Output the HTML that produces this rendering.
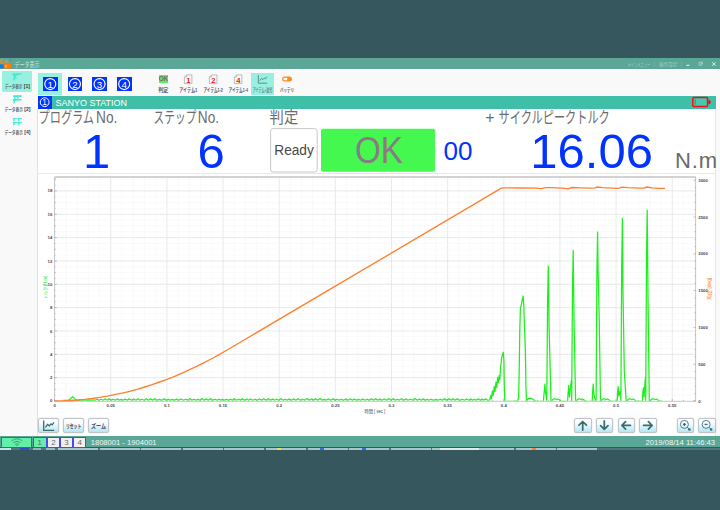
<!DOCTYPE html>
<html><head><meta charset="utf-8"><title>Data</title>
<style>
html,body{margin:0;padding:0;}
body{width:720px;height:510px;overflow:hidden;background:#37575f;position:relative;font-family:"Liberation Sans",sans-serif;}
.abs{position:absolute;}
.t{position:absolute;white-space:nowrap;line-height:1;}
svg{position:absolute;left:0;top:0;overflow:visible;}
svg text{font-family:"Liberation Sans","Noto Sans CJK JP",sans-serif;}
.btn{position:absolute;box-sizing:border-box;border:1px solid #c0c4c8;border-radius:2px;box-shadow:0 0 1.2px #b8b8b8;background:linear-gradient(#ffffff 0%,#f4fbfd 35%,#b4e6f4 100%);}
.sb{position:absolute;box-sizing:border-box;border:1px solid #4a4aec;top:436.6px;height:11.2px;}
</style></head><body>

<div class="abs" style="left:0;top:57.6px;width:720px;height:11.1px;background:#5aa797;"></div>
<div class="abs" style="left:0;top:68.7px;width:720px;height:367px;background:#f9f9f9;"></div>
<div class="abs" style="left:0;top:68.7px;width:720px;height:1.5px;background:#fff;"></div>
<div class="abs" style="left:37px;top:108px;width:679.4px;height:327.7px;background:#fff;border-left:1px solid #e2e2e2;border-right:1px solid #e6e6e6;box-sizing:border-box;"></div>
<div class="abs" style="left:38px;top:173.2px;width:678px;height:1px;background:#e8e8e8;"></div>
<div class="abs" style="left:38px;top:95.5px;width:678px;height:13px;background:#40bfa8;"></div>
<div class="abs" style="left:38px;top:95.5px;width:13.5px;height:13px;background:#0033ff;"></div>
<div class="abs" style="left:0;top:435.7px;width:720px;height:11.8px;background:#5aa797;"></div>
<div class="abs" style="left:0;top:447.5px;width:720px;height:2.8px;background:#4f787e;"></div>
<div class="abs" style="left:0px;top:447.7px;width:11px;height:2.5px;background:#c8e0e8;"></div>
<div class="abs" style="left:20px;top:447.7px;width:9px;height:2.5px;background:#3050c0;"></div>
<div class="abs" style="left:33px;top:447.7px;width:8px;height:2.5px;background:#98b0c0;"></div>
<div class="abs" style="left:46px;top:447.7px;width:9px;height:2.5px;background:#a0b8c0;"></div>
<div class="abs" style="left:58px;top:447.7px;width:40px;height:2.5px;background:#a9c7ca;"></div>
<div class="abs" style="left:99.6px;top:447.7px;width:40px;height:2.5px;background:#a9c7ca;"></div>
<div class="abs" style="left:141.2px;top:447.7px;width:40px;height:2.5px;background:#a9c7ca;"></div>
<div class="abs" style="left:182.79999999999998px;top:447.7px;width:40px;height:2.5px;background:#a9c7ca;"></div>
<div class="abs" style="left:224.39999999999998px;top:447.7px;width:40px;height:2.5px;background:#a9c7ca;"></div>
<div class="abs" style="left:266.0px;top:447.7px;width:40px;height:2.5px;background:#a9c7ca;"></div>
<div class="abs" style="left:307.6px;top:447.7px;width:40px;height:2.5px;background:#a9c7ca;"></div>
<div class="abs" style="left:349.20000000000005px;top:447.7px;width:40px;height:2.5px;background:#a9c7ca;"></div>
<div class="abs" style="left:390.80000000000007px;top:447.7px;width:40px;height:2.5px;background:#a9c7ca;"></div>
<div class="abs" style="left:432.4000000000001px;top:447.7px;width:40px;height:2.5px;background:#a9c7ca;"></div>
<div class="abs" style="left:474.0000000000001px;top:447.7px;width:40px;height:2.5px;background:#a9c7ca;"></div>
<div class="abs" style="left:515.6000000000001px;top:447.7px;width:40px;height:2.5px;background:#a9c7ca;"></div>
<div class="abs" style="left:557.2000000000002px;top:447.7px;width:40px;height:2.5px;background:#a9c7ca;"></div>
<div class="abs" style="left:277px;top:448px;width:4px;height:2px;background:#f0e060;"></div>
<div class="abs" style="left:320px;top:448px;width:4px;height:2px;background:#3070e0;"></div>
<div class="abs" style="left:362px;top:448px;width:4px;height:2px;background:#3070e0;"></div>
<div class="abs" style="left:532px;top:448px;width:4px;height:2px;background:#ff8030;"></div>
<div class="abs" style="left:440px;top:447.7px;width:39px;height:2.5px;background:#dfeaea;"></div>
<div class="abs" style="left:2px;top:71.4px;width:30px;height:20.6px;background:#98f0e0;border-radius:1px;"></div>
<div class="abs" style="left:38.3px;top:73.4px;width:23.7px;height:21.4px;background:#98f0e0;"></div>
<div class="abs" style="left:250.9px;top:73.2px;width:23.1px;height:21.7px;background:#98f0e0;"></div>
<div class="abs" style="left:42.9px;top:76.8px;width:14.8px;height:14.4px;background:#0033ff;"></div>
<div class="abs" style="left:67.6px;top:76.8px;width:14.8px;height:14.4px;background:#0033ff;"></div>
<div class="abs" style="left:92.2px;top:76.8px;width:14.8px;height:14.4px;background:#0033ff;"></div>
<div class="abs" style="left:116.8px;top:76.8px;width:14.8px;height:14.4px;background:#0033ff;"></div>
<div class="abs" style="left:158.7px;top:74.9px;width:9.2px;height:8.4px;background:#58f058;"></div>
<div class="t" style="left:158.7px;width:9.2px;text-align:center;top:76.1px;font-size:6.5px;font-weight:bold;color:#7a6a78;letter-spacing:-0.3px;">OK</div>
<div class="btn" style="left:38.4px;top:418.1px;width:20.7px;height:15px;"></div>
<div class="btn" style="left:63.0px;top:418.1px;width:20.9px;height:15px;"></div>
<div class="btn" style="left:88.0px;top:418.1px;width:20.6px;height:15px;"></div>
<div class="btn" style="left:574.3px;top:417.9px;width:17.4px;height:14.8px;"></div>
<div class="btn" style="left:595.6px;top:417.9px;width:17.4px;height:14.8px;"></div>
<div class="btn" style="left:617.5px;top:417.9px;width:17.4px;height:14.8px;"></div>
<div class="btn" style="left:639.2px;top:417.9px;width:17.4px;height:14.8px;"></div>
<div class="btn" style="left:676.8px;top:417.9px;width:17.4px;height:14.8px;"></div>
<div class="btn" style="left:698.4px;top:417.9px;width:17.4px;height:14.8px;"></div>
<div class="sb" style="left:1.4px;width:30.6px;background:#62f0a8;border-color:#3c5cd8;"></div>
<div class="sb" style="left:33.0px;width:13.7px;background:#62f0a8;"></div>
<div class="t" style="left:33.0px;width:13.7px;text-align:center;top:438.5px;font-size:8px;color:#686868;">1</div>
<div class="sb" style="left:47.3px;width:12.5px;background:#f2f0ee;"></div>
<div class="t" style="left:47.3px;width:12.5px;text-align:center;top:438.5px;font-size:8px;color:#686868;">2</div>
<div class="sb" style="left:60.3px;width:12.5px;background:#f2f0ee;"></div>
<div class="t" style="left:60.3px;width:12.5px;text-align:center;top:438.5px;font-size:8px;color:#686868;">3</div>
<div class="sb" style="left:73.3px;width:12.7px;background:#f2f0ee;"></div>
<div class="t" style="left:73.3px;width:12.7px;text-align:center;top:438.5px;font-size:8px;color:#686868;">4</div>
<svg width="720" height="510" viewBox="0 0 720 510">
<rect x="0" y="58.6" width="11" height="10" fill="#58a8a0"/>
<path d="M3.4 59.8H0.9V62.9H3.4M5.2 59.2V63.4M8 59.2V63.4M5.2 61.4H8" fill="none" stroke="#ff8a10" stroke-width="1.1"/>
<rect x="8.6" y="59.4" width="2.2" height="1" fill="#2090f0"/>
<rect x="0" y="64.4" width="3.6" height="3.8" fill="#1878e8"/>
<rect x="4.2" y="64" width="6.8" height="4.6" fill="#ff7c08"/>
<rect x="5" y="65" width="2" height="2.6" fill="#ffa040"/>
<circle cx="50.25" cy="84.05" r="5.5" fill="none" stroke="#fff" stroke-width="1.15"/>
<text x="50.25" y="87.5" font-size="9.8" fill="#fff" text-anchor="middle">1</text>
<circle cx="74.94999999999999" cy="84.05" r="5.5" fill="none" stroke="#fff" stroke-width="1.15"/>
<text x="74.95" y="87.5" font-size="9.8" fill="#fff" text-anchor="middle">2</text>
<circle cx="99.55" cy="84.05" r="5.5" fill="none" stroke="#fff" stroke-width="1.15"/>
<text x="99.55" y="87.5" font-size="9.8" fill="#fff" text-anchor="middle">3</text>
<circle cx="124.14999999999999" cy="84.05" r="5.5" fill="none" stroke="#fff" stroke-width="1.15"/>
<text x="124.15" y="87.5" font-size="9.8" fill="#fff" text-anchor="middle">4</text>
<circle cx="44.65" cy="102.15" r="4.4" fill="none" stroke="#fff" stroke-width="1"/>
<text x="44.65" y="105.05" font-size="8.2" fill="#fff" text-anchor="middle">1</text>
<text x="55.5" y="105.6" font-size="9.5" fill="#fff" textLength="71.5" lengthAdjust="spacingAndGlyphs">SANYO STATION</text>
<rect x="692.8" y="97.6" width="14.8" height="8.8" rx="1.2" fill="#48c8b4" stroke="#f01010" stroke-width="1.5"/>
<rect x="708.3" y="100.3" width="2.3" height="3.6" rx="0.8" fill="#f01010"/>
<rect x="694.6" y="99.3" width="1.3" height="5.4" fill="#c06050"/>
<text x="14.6" y="66.6" font-size="7" fill="#cfe0dc" textLength="25" lengthAdjust="spacingAndGlyphs">データ表示</text>
<text x="627.4" y="66" font-size="4.6" fill="#a6cec8" textLength="22.8" lengthAdjust="spacingAndGlyphs">メインメニュー</text>
<text x="659.1" y="66" font-size="4.8" fill="#a6cec8" textLength="18.3" lengthAdjust="spacingAndGlyphs">操作設定</text>
<rect x="654" y="61" width="0.6" height="6" fill="#78b8aa"/><rect x="681" y="61" width="0.6" height="6" fill="#78b8aa"/>
<rect x="686.4" y="64.8" width="3" height="1" fill="#eef"/>
<rect x="699" y="62.8" width="2.6" height="2.4" fill="none" stroke="#c4e2dc" stroke-width="0.6"/><path d="M700 62.6V62H702.5V64.3H701.8" fill="none" stroke="#c4e2dc" stroke-width="0.5"/>
<path d="M712.2 62.2L715.6 65.8M715.6 62.2L712.2 65.8" stroke="#f4faf8" stroke-width="0.8" fill="none"/>
<path transform="translate(12.6,73.2) scale(1.0)" fill="#44ecd0" d="M0 0H9V1.6H5.6V2.6H3.6L3.2 4.2H4.4V5.2H2.6L2.2 7H0.4L1.2 2.6H0Z"/>
<text x="4.8" y="87.9" font-size="5" font-weight="bold" fill="#5e6a70" textLength="17.6" lengthAdjust="spacingAndGlyphs">データ表示</text>
<text x="23.8" y="87.9" font-size="5.2" font-weight="bold" fill="#3a3a44" textLength="6.2" lengthAdjust="spacingAndGlyphs">[1]</text>
<path transform="translate(13.6,95.4) scale(0.62)" fill="#44ecd0" d="M0 0H9V1.6H5.6V2.6H3.6L3.2 4.2H4.4V5.2H2.6L2.2 7H0.4L1.2 2.6H0Z"/>
<path transform="translate(12.8,99.2) scale(0.62)" fill="#44ecd0" d="M0 0H9V1.6H5.6V2.6H3.6L3.2 4.2H4.4V5.2H2.6L2.2 7H0.4L1.2 2.6H0Z"/>
<path transform="translate(16.8,95.4) scale(0.55)" fill="#44ecd0" d="M0 0H9V1.6H5.6V2.6H3.6L3.2 4.2H4.4V5.2H2.6L2.2 7H0.4L1.2 2.6H0Z"/>
<rect x="13" y="95.4" width="8.6" height="1.5" fill="#44ecd0"/><rect x="13" y="99" width="8.6" height="1.5" fill="#44ecd0"/>
<text x="4.6" y="110.9" font-size="5" font-weight="bold" fill="#5e6a70" textLength="18.2" lengthAdjust="spacingAndGlyphs">データ表示</text>
<text x="24.2" y="110.9" font-size="5.2" font-weight="bold" fill="#3a3a44" textLength="6.2" lengthAdjust="spacingAndGlyphs">[2]</text>
<path transform="translate(12.9,118.0) scale(0.5)" fill="#44ecd0" d="M0 0H9V1.6H5.6V2.6H3.6L3.2 4.2H4.4V5.2H2.6L2.2 7H0.4L1.2 2.6H0Z"/>
<path transform="translate(17.5,118.0) scale(0.5)" fill="#44ecd0" d="M0 0H9V1.6H5.6V2.6H3.6L3.2 4.2H4.4V5.2H2.6L2.2 7H0.4L1.2 2.6H0Z"/>
<path transform="translate(12.9,122.1) scale(0.5)" fill="#44ecd0" d="M0 0H9V1.6H5.6V2.6H3.6L3.2 4.2H4.4V5.2H2.6L2.2 7H0.4L1.2 2.6H0Z"/>
<path transform="translate(17.5,122.1) scale(0.5)" fill="#44ecd0" d="M0 0H9V1.6H5.6V2.6H3.6L3.2 4.2H4.4V5.2H2.6L2.2 7H0.4L1.2 2.6H0Z"/>
<text x="4.6" y="133.5" font-size="5" font-weight="bold" fill="#5e6a70" textLength="18.2" lengthAdjust="spacingAndGlyphs">データ表示</text>
<text x="24.2" y="133.5" font-size="5.2" font-weight="bold" fill="#3a3a44" textLength="6.2" lengthAdjust="spacingAndGlyphs">[4]</text>
<text x="158.2" y="91.8" font-size="5.2" font-weight="bold" fill="#4e5664" textLength="10.2" lengthAdjust="spacingAndGlyphs">判定</text>
<text x="179.2" y="91.8" font-size="5.2" font-weight="bold" fill="#4e5664" textLength="18.1" lengthAdjust="spacingAndGlyphs">アイテム1</text>
<text x="203.4" y="91.8" font-size="5.2" font-weight="bold" fill="#4e5664" textLength="19.4" lengthAdjust="spacingAndGlyphs">アイテム1-2</text>
<text x="228.4" y="91.8" font-size="5.2" font-weight="bold" fill="#4e5664" textLength="19.6" lengthAdjust="spacingAndGlyphs">アイテム1-4</text>
<text x="252.65" y="91.8" font-size="5.2" font-weight="bold" fill="#6a8a8a" textLength="19.8" lengthAdjust="spacingAndGlyphs">アイテム+波形</text>
<text x="280.1" y="91.8" font-size="5.2" font-weight="bold" fill="#4e5664" textLength="13.8" lengthAdjust="spacingAndGlyphs">バッテリ</text>
<path d="M186.6 74.9H191.9V83.6H184.4V77.1Z" fill="#fbfbfb" stroke="#a0a4a8" stroke-width="0.7" stroke-linejoin="round"/><path d="M186.6 74.9V77.1H184.4" fill="none" stroke="#a0a4a8" stroke-width="0.6"/><text x="188.3" y="82.7" font-size="7.6" font-weight="bold" fill="#f01818" text-anchor="middle" font-family="Liberation Sans">1</text>
<path d="M211.6 74.9H216.9V83.6H209.4V77.1Z" fill="#fbfbfb" stroke="#a0a4a8" stroke-width="0.7" stroke-linejoin="round"/><path d="M211.6 74.9V77.1H209.4" fill="none" stroke="#a0a4a8" stroke-width="0.6"/><text x="213.3" y="82.7" font-size="7.6" font-weight="bold" fill="#f01818" text-anchor="middle" font-family="Liberation Sans">2</text>
<path d="M236.6 74.9H241.9V83.6H234.4V77.1Z" fill="#fbfbfb" stroke="#a0a4a8" stroke-width="0.7" stroke-linejoin="round"/><path d="M236.6 74.9V77.1H234.4" fill="none" stroke="#a0a4a8" stroke-width="0.6"/><text x="238.3" y="82.7" font-size="7.6" font-weight="bold" fill="#f01818" text-anchor="middle" font-family="Liberation Sans">4</text>
<path d="M258.3 75V83.2H267.2" fill="none" stroke="#5a6a72" stroke-width="0.75"/>
<path d="M259.6 80.6L261.6 78.4L263 79.6L264.4 78L265.4 78.8L267 76.6" fill="none" stroke="#5a6a72" stroke-width="0.75"/>
<rect x="282.1" y="76.4" width="9.8" height="5.2" rx="2.4" fill="#ff8a18"/>
<rect x="283.5" y="77.7" width="3.7" height="2.6" rx="0.5" fill="#fff"/>
<text x="38.6" y="123.4" font-size="16" fill="#6c6c6c" textLength="55.4" lengthAdjust="spacingAndGlyphs">プログラム</text>
<text x="96" y="123.4" font-size="16" fill="#6c6c6c" textLength="21.3" lengthAdjust="spacingAndGlyphs">No.</text>
<text x="153.6" y="123.4" font-size="16" fill="#6c6c6c" textLength="42.8" lengthAdjust="spacingAndGlyphs">ステップ</text>
<text x="197.8" y="123.4" font-size="16" fill="#6c6c6c" textLength="21.2" lengthAdjust="spacingAndGlyphs">No.</text>
<text x="269.6" y="123.4" font-size="16" fill="#6c6c6c" textLength="28.6" lengthAdjust="spacingAndGlyphs">判定</text>
<text x="485.3" y="123.4" font-size="16" fill="#6c6c6c">+</text>
<text x="498.6" y="123.4" font-size="16" fill="#6c6c6c" textLength="111.2" lengthAdjust="spacingAndGlyphs">サイクルピークトルク</text>
<path d="M65.83 177.0V401.0" stroke="#f6f6f6" stroke-width="0.6"/><path d="M77.06 177.0V401.0" stroke="#f6f6f6" stroke-width="0.6"/><path d="M88.29 177.0V401.0" stroke="#f6f6f6" stroke-width="0.6"/><path d="M99.52 177.0V401.0" stroke="#f6f6f6" stroke-width="0.6"/><path d="M110.75 177.0V401.0" stroke="#e3e3e3" stroke-width="0.8"/><path d="M121.98 177.0V401.0" stroke="#f6f6f6" stroke-width="0.6"/><path d="M133.21 177.0V401.0" stroke="#f6f6f6" stroke-width="0.6"/><path d="M144.44 177.0V401.0" stroke="#f6f6f6" stroke-width="0.6"/><path d="M155.67 177.0V401.0" stroke="#f6f6f6" stroke-width="0.6"/><path d="M166.90 177.0V401.0" stroke="#e3e3e3" stroke-width="0.8"/><path d="M178.13 177.0V401.0" stroke="#f6f6f6" stroke-width="0.6"/><path d="M189.36 177.0V401.0" stroke="#f6f6f6" stroke-width="0.6"/><path d="M200.59 177.0V401.0" stroke="#f6f6f6" stroke-width="0.6"/><path d="M211.82 177.0V401.0" stroke="#f6f6f6" stroke-width="0.6"/><path d="M223.05 177.0V401.0" stroke="#e3e3e3" stroke-width="0.8"/><path d="M234.28 177.0V401.0" stroke="#f6f6f6" stroke-width="0.6"/><path d="M245.51 177.0V401.0" stroke="#f6f6f6" stroke-width="0.6"/><path d="M256.74 177.0V401.0" stroke="#f6f6f6" stroke-width="0.6"/><path d="M267.97 177.0V401.0" stroke="#f6f6f6" stroke-width="0.6"/><path d="M279.20 177.0V401.0" stroke="#e3e3e3" stroke-width="0.8"/><path d="M290.43 177.0V401.0" stroke="#f6f6f6" stroke-width="0.6"/><path d="M301.66 177.0V401.0" stroke="#f6f6f6" stroke-width="0.6"/><path d="M312.89 177.0V401.0" stroke="#f6f6f6" stroke-width="0.6"/><path d="M324.12 177.0V401.0" stroke="#f6f6f6" stroke-width="0.6"/><path d="M335.35 177.0V401.0" stroke="#e3e3e3" stroke-width="0.8"/><path d="M346.58 177.0V401.0" stroke="#f6f6f6" stroke-width="0.6"/><path d="M357.81 177.0V401.0" stroke="#f6f6f6" stroke-width="0.6"/><path d="M369.04 177.0V401.0" stroke="#f6f6f6" stroke-width="0.6"/><path d="M380.27 177.0V401.0" stroke="#f6f6f6" stroke-width="0.6"/><path d="M391.50 177.0V401.0" stroke="#e3e3e3" stroke-width="0.8"/><path d="M402.73 177.0V401.0" stroke="#f6f6f6" stroke-width="0.6"/><path d="M413.96 177.0V401.0" stroke="#f6f6f6" stroke-width="0.6"/><path d="M425.19 177.0V401.0" stroke="#f6f6f6" stroke-width="0.6"/><path d="M436.42 177.0V401.0" stroke="#f6f6f6" stroke-width="0.6"/><path d="M447.65 177.0V401.0" stroke="#e3e3e3" stroke-width="0.8"/><path d="M458.88 177.0V401.0" stroke="#f6f6f6" stroke-width="0.6"/><path d="M470.11 177.0V401.0" stroke="#f6f6f6" stroke-width="0.6"/><path d="M481.34 177.0V401.0" stroke="#f6f6f6" stroke-width="0.6"/><path d="M492.57 177.0V401.0" stroke="#f6f6f6" stroke-width="0.6"/><path d="M503.80 177.0V401.0" stroke="#e3e3e3" stroke-width="0.8"/><path d="M515.03 177.0V401.0" stroke="#f6f6f6" stroke-width="0.6"/><path d="M526.26 177.0V401.0" stroke="#f6f6f6" stroke-width="0.6"/><path d="M537.49 177.0V401.0" stroke="#f6f6f6" stroke-width="0.6"/><path d="M548.72 177.0V401.0" stroke="#f6f6f6" stroke-width="0.6"/><path d="M559.95 177.0V401.0" stroke="#e3e3e3" stroke-width="0.8"/><path d="M571.18 177.0V401.0" stroke="#f6f6f6" stroke-width="0.6"/><path d="M582.41 177.0V401.0" stroke="#f6f6f6" stroke-width="0.6"/><path d="M593.64 177.0V401.0" stroke="#f6f6f6" stroke-width="0.6"/><path d="M604.87 177.0V401.0" stroke="#f6f6f6" stroke-width="0.6"/><path d="M616.10 177.0V401.0" stroke="#e3e3e3" stroke-width="0.8"/><path d="M627.33 177.0V401.0" stroke="#f6f6f6" stroke-width="0.6"/><path d="M638.56 177.0V401.0" stroke="#f6f6f6" stroke-width="0.6"/><path d="M649.79 177.0V401.0" stroke="#f6f6f6" stroke-width="0.6"/><path d="M661.02 177.0V401.0" stroke="#f6f6f6" stroke-width="0.6"/><path d="M672.25 177.0V401.0" stroke="#e3e3e3" stroke-width="0.8"/><path d="M683.48 177.0V401.0" stroke="#f6f6f6" stroke-width="0.6"/><path d="M54.6 395.17H695.6" stroke="#f6f6f6" stroke-width="0.6"/><path d="M54.6 389.33H695.6" stroke="#f6f6f6" stroke-width="0.6"/><path d="M54.6 383.50H695.6" stroke="#f6f6f6" stroke-width="0.6"/><path d="M54.6 377.66H695.6" stroke="#e3e3e3" stroke-width="0.8"/><path d="M54.6 371.82H695.6" stroke="#f6f6f6" stroke-width="0.6"/><path d="M54.6 365.99H695.6" stroke="#f6f6f6" stroke-width="0.6"/><path d="M54.6 360.15H695.6" stroke="#f6f6f6" stroke-width="0.6"/><path d="M54.6 354.32H695.6" stroke="#e3e3e3" stroke-width="0.8"/><path d="M54.6 348.49H695.6" stroke="#f6f6f6" stroke-width="0.6"/><path d="M54.6 342.65H695.6" stroke="#f6f6f6" stroke-width="0.6"/><path d="M54.6 336.81H695.6" stroke="#f6f6f6" stroke-width="0.6"/><path d="M54.6 330.98H695.6" stroke="#e3e3e3" stroke-width="0.8"/><path d="M54.6 325.14H695.6" stroke="#f6f6f6" stroke-width="0.6"/><path d="M54.6 319.31H695.6" stroke="#f6f6f6" stroke-width="0.6"/><path d="M54.6 313.48H695.6" stroke="#f6f6f6" stroke-width="0.6"/><path d="M54.6 307.64H695.6" stroke="#e3e3e3" stroke-width="0.8"/><path d="M54.6 301.81H695.6" stroke="#f6f6f6" stroke-width="0.6"/><path d="M54.6 295.97H695.6" stroke="#f6f6f6" stroke-width="0.6"/><path d="M54.6 290.13H695.6" stroke="#f6f6f6" stroke-width="0.6"/><path d="M54.6 284.30H695.6" stroke="#e3e3e3" stroke-width="0.8"/><path d="M54.6 278.47H695.6" stroke="#f6f6f6" stroke-width="0.6"/><path d="M54.6 272.63H695.6" stroke="#f6f6f6" stroke-width="0.6"/><path d="M54.6 266.79H695.6" stroke="#f6f6f6" stroke-width="0.6"/><path d="M54.6 260.96H695.6" stroke="#e3e3e3" stroke-width="0.8"/><path d="M54.6 255.12H695.6" stroke="#f6f6f6" stroke-width="0.6"/><path d="M54.6 249.29H695.6" stroke="#f6f6f6" stroke-width="0.6"/><path d="M54.6 243.46H695.6" stroke="#f6f6f6" stroke-width="0.6"/><path d="M54.6 237.62H695.6" stroke="#e3e3e3" stroke-width="0.8"/><path d="M54.6 231.78H695.6" stroke="#f6f6f6" stroke-width="0.6"/><path d="M54.6 225.95H695.6" stroke="#f6f6f6" stroke-width="0.6"/><path d="M54.6 220.12H695.6" stroke="#f6f6f6" stroke-width="0.6"/><path d="M54.6 214.28H695.6" stroke="#e3e3e3" stroke-width="0.8"/><path d="M54.6 208.44H695.6" stroke="#f6f6f6" stroke-width="0.6"/><path d="M54.6 202.61H695.6" stroke="#f6f6f6" stroke-width="0.6"/><path d="M54.6 196.78H695.6" stroke="#f6f6f6" stroke-width="0.6"/><path d="M54.6 190.94H695.6" stroke="#e3e3e3" stroke-width="0.8"/><path d="M54.6 185.10H695.6" stroke="#f6f6f6" stroke-width="0.6"/><path d="M54.6 179.27H695.6" stroke="#f6f6f6" stroke-width="0.6"/>
<path d="M54.6 177.0H695.6" stroke="#c4c4c4" stroke-width="1.4" fill="none"/>
<path d="M54.6 177.0V401.3H695.6V177.0" stroke="#aeaeae" stroke-width="0.7" fill="none"/>
<path d="M54.6 401.00h2.2M54.6 395.17h0.8M54.6 389.33h1.2M54.6 383.50h0.8M54.6 377.66h2.2M54.6 371.82h0.8M54.6 365.99h1.2M54.6 360.15h0.8M54.6 354.32h2.2M54.6 348.49h0.8M54.6 342.65h1.2M54.6 336.81h0.8M54.6 330.98h2.2M54.6 325.14h0.8M54.6 319.31h1.2M54.6 313.48h0.8M54.6 307.64h2.2M54.6 301.81h0.8M54.6 295.97h1.2M54.6 290.13h0.8M54.6 284.30h2.2M54.6 278.47h0.8M54.6 272.63h1.2M54.6 266.79h0.8M54.6 260.96h2.2M54.6 255.12h0.8M54.6 249.29h1.2M54.6 243.46h0.8M54.6 237.62h2.2M54.6 231.78h0.8M54.6 225.95h1.2M54.6 220.12h0.8M54.6 214.28h2.2M54.6 208.44h0.8M54.6 202.61h1.2M54.6 196.78h0.8M54.6 190.94h2.2M54.6 185.10h0.8M54.6 179.27h1.2M54.6 179.27h0.8M695.6 401.00h-2.2M695.6 393.64h-1.1M695.6 386.28h-1.1M695.6 378.92h-1.1M695.6 371.56h-1.1M695.6 364.20h-2.2M695.6 356.84h-1.1M695.6 349.48h-1.1M695.6 342.12h-1.1M695.6 334.76h-1.1M695.6 327.40h-2.2M695.6 320.04h-1.1M695.6 312.68h-1.1M695.6 305.32h-1.1M695.6 297.96h-1.1M695.6 290.60h-2.2M695.6 283.24h-1.1M695.6 275.88h-1.1M695.6 268.52h-1.1M695.6 261.16h-1.1M695.6 253.80h-2.2M695.6 246.44h-1.1M695.6 239.08h-1.1M695.6 231.72h-1.1M695.6 224.36h-1.1M695.6 217.00h-2.2M695.6 209.64h-1.1M695.6 202.28h-1.1M695.6 194.92h-1.1M695.6 187.56h-1.1M695.6 180.20h-2.2M54.60 401.0v-2M65.83 401.0v-1M77.06 401.0v-1M88.29 401.0v-1M99.52 401.0v-1M110.75 401.0v-2M121.98 401.0v-1M133.21 401.0v-1M144.44 401.0v-1M155.67 401.0v-1M166.90 401.0v-2M178.13 401.0v-1M189.36 401.0v-1M200.59 401.0v-1M211.82 401.0v-1M223.05 401.0v-2M234.28 401.0v-1M245.51 401.0v-1M256.74 401.0v-1M267.97 401.0v-1M279.20 401.0v-2M290.43 401.0v-1M301.66 401.0v-1M312.89 401.0v-1M324.12 401.0v-1M335.35 401.0v-2M346.58 401.0v-1M357.81 401.0v-1M369.04 401.0v-1M380.27 401.0v-1M391.50 401.0v-2M402.73 401.0v-1M413.96 401.0v-1M425.19 401.0v-1M436.42 401.0v-1M447.65 401.0v-2M458.88 401.0v-1M470.11 401.0v-1M481.34 401.0v-1M492.57 401.0v-1M503.80 401.0v-2M515.03 401.0v-1M526.26 401.0v-1M537.49 401.0v-1M548.72 401.0v-1M559.95 401.0v-2M571.18 401.0v-1M582.41 401.0v-1M593.64 401.0v-1M604.87 401.0v-1M616.10 401.0v-2M627.33 401.0v-1M638.56 401.0v-1M649.79 401.0v-1M661.02 401.0v-1M672.25 401.0v-2M683.48 401.0v-1M694.71 401.0v-1" stroke="#888" stroke-width="0.5" fill="none"/>
<text x="52.3" y="379.21" font-size="4.3" font-weight="bold" fill="#4a4a56" text-anchor="end" font-family="Liberation Sans">2</text>
<text x="52.3" y="355.87" font-size="4.3" font-weight="bold" fill="#4a4a56" text-anchor="end" font-family="Liberation Sans">4</text>
<text x="52.3" y="332.53" font-size="4.3" font-weight="bold" fill="#4a4a56" text-anchor="end" font-family="Liberation Sans">6</text>
<text x="52.3" y="309.19" font-size="4.3" font-weight="bold" fill="#4a4a56" text-anchor="end" font-family="Liberation Sans">8</text>
<text x="52.3" y="285.85" font-size="4.3" font-weight="bold" fill="#4a4a56" text-anchor="end" font-family="Liberation Sans">10</text>
<text x="52.3" y="262.51" font-size="4.3" font-weight="bold" fill="#4a4a56" text-anchor="end" font-family="Liberation Sans">12</text>
<text x="52.3" y="239.17" font-size="4.3" font-weight="bold" fill="#4a4a56" text-anchor="end" font-family="Liberation Sans">14</text>
<text x="52.3" y="215.83" font-size="4.3" font-weight="bold" fill="#4a4a56" text-anchor="end" font-family="Liberation Sans">16</text>
<text x="52.3" y="192.49" font-size="4.3" font-weight="bold" fill="#4a4a56" text-anchor="end" font-family="Liberation Sans">18</text>
<text x="52.3" y="402.3" font-size="4.3" font-weight="bold" fill="#4a4a56" text-anchor="end" font-family="Liberation Sans">0</text>
<text x="698.3" y="402.55" font-size="4.3" font-weight="bold" fill="#4a4a56" font-family="Liberation Sans">0</text>
<text x="698.3" y="365.75" font-size="4.3" font-weight="bold" fill="#4a4a56" font-family="Liberation Sans">500</text>
<text x="698.3" y="328.95" font-size="4.3" font-weight="bold" fill="#4a4a56" font-family="Liberation Sans">1000</text>
<text x="698.3" y="292.15" font-size="4.3" font-weight="bold" fill="#4a4a56" font-family="Liberation Sans">1500</text>
<text x="698.3" y="255.35" font-size="4.3" font-weight="bold" fill="#4a4a56" font-family="Liberation Sans">2000</text>
<text x="698.3" y="218.55" font-size="4.3" font-weight="bold" fill="#4a4a56" font-family="Liberation Sans">2500</text>
<text x="698.3" y="181.75" font-size="4.3" font-weight="bold" fill="#4a4a56" font-family="Liberation Sans">3000</text>
<text x="54.60" y="406.9" font-size="4.3" font-weight="bold" fill="#4a4a56" text-anchor="middle" font-family="Liberation Sans">0</text>
<text x="110.75" y="406.9" font-size="4.3" font-weight="bold" fill="#4a4a56" text-anchor="middle" font-family="Liberation Sans">0.05</text>
<text x="166.90" y="406.9" font-size="4.3" font-weight="bold" fill="#4a4a56" text-anchor="middle" font-family="Liberation Sans">0.1</text>
<text x="223.05" y="406.9" font-size="4.3" font-weight="bold" fill="#4a4a56" text-anchor="middle" font-family="Liberation Sans">0.15</text>
<text x="279.20" y="406.9" font-size="4.3" font-weight="bold" fill="#4a4a56" text-anchor="middle" font-family="Liberation Sans">0.2</text>
<text x="335.35" y="406.9" font-size="4.3" font-weight="bold" fill="#4a4a56" text-anchor="middle" font-family="Liberation Sans">0.25</text>
<text x="391.50" y="406.9" font-size="4.3" font-weight="bold" fill="#4a4a56" text-anchor="middle" font-family="Liberation Sans">0.3</text>
<text x="447.65" y="406.9" font-size="4.3" font-weight="bold" fill="#4a4a56" text-anchor="middle" font-family="Liberation Sans">0.35</text>
<text x="503.80" y="406.9" font-size="4.3" font-weight="bold" fill="#4a4a56" text-anchor="middle" font-family="Liberation Sans">0.4</text>
<text x="559.95" y="406.9" font-size="4.3" font-weight="bold" fill="#4a4a56" text-anchor="middle" font-family="Liberation Sans">0.45</text>
<text x="616.10" y="406.9" font-size="4.3" font-weight="bold" fill="#4a4a56" text-anchor="middle" font-family="Liberation Sans">0.5</text>
<text x="672.25" y="406.9" font-size="4.3" font-weight="bold" fill="#4a4a56" text-anchor="middle" font-family="Liberation Sans">0.55</text>
<g transform="translate(47,288) rotate(-90)"><text x="-11.25" y="0" font-size="4.5" fill="#30e030" textLength="23.3" lengthAdjust="spacingAndGlyphs">トルク [N.m]</text></g>
<g transform="translate(711.3,288.5) rotate(-90)"><text x="-11.4" y="0" font-size="4.5" fill="#ff7a28" textLength="22.4" lengthAdjust="spacingAndGlyphs">角度 [deg]</text></g>
<text x="364.5" y="413.1" font-size="4.5" fill="#404a68" textLength="20.8" lengthAdjust="spacingAndGlyphs">時間 [ sec ]</text>
<clipPath id="gc"><rect x="54.6" y="177.0" width="641.0" height="223.75"/></clipPath>
<polyline clip-path="url(#gc)" fill="none" stroke="#1cf01c" stroke-width="1.25" stroke-linejoin="round" points="63.5,400.2 64.5,400.3 66.5,400.3 67.5,400.3 68.5,400.1 69.5,399.6 70.5,398.7 71.5,397.5 72.5,396.9 73.5,397.4 74.5,398.6 75.5,399.6 76.5,400.1 77.5,400.3 78.5,400.3 79.5,400.3 81.3,399.8 83.5,400.3 85.3,399.8 87.4,400.3 89.4,399.8 91.1,400.3 93.2,399.8 95.0,400.3 97.0,399.3 98.8,400.3 101.1,399.3 103.0,400.3 105.5,398.9 107.5,400.3 109.2,398.7 111.2,400.3 113.0,399.2 115.3,400.3 117.5,398.9 119.5,400.3 121.2,399.4 123.1,400.3 125.1,399.1 127.3,400.3 129.2,398.8 131.5,400.3 133.7,399.0 136.1,400.3 138.0,398.6 139.8,400.3 142.1,399.3 144.2,400.3 146.4,398.8 148.6,400.3 150.5,398.8 152.7,400.3 154.8,398.7 157.2,400.3 159.5,399.4 161.7,400.3 164.2,398.7 166.1,400.3 168.4,399.4 170.4,400.3 172.2,399.4 174.5,400.3 176.4,399.1 178.8,400.3 180.9,399.0 183.3,400.3 185.7,399.2 187.7,400.3 190.1,398.6 192.0,400.3 193.8,399.2 195.9,400.3 197.8,399.4 199.9,400.3 202.0,398.6 204.3,400.3 206.5,398.9 208.2,400.3 210.5,398.7 212.9,400.3 214.9,399.3 217.1,400.3 218.9,399.2 220.7,400.3 222.4,399.4 224.3,400.3 226.3,399.4 228.7,400.3 230.5,399.2 232.4,400.3 234.2,398.7 236.7,400.3 238.8,399.3 240.6,400.3 242.5,398.7 244.3,400.3 246.8,399.0 248.6,400.3 250.3,399.0 252.8,400.3 255.1,399.2 257.1,400.3 259.4,399.0 261.7,400.3 263.6,398.8 266.1,400.3 268.4,398.7 270.7,400.3 272.8,399.1 274.6,400.3 276.5,399.2 278.7,400.3 280.8,398.7 283.3,400.3 285.3,399.2 287.2,400.3 289.0,398.9 291.4,400.3 293.5,398.9 295.9,400.3 298.1,398.7 300.4,400.3 302.5,399.3 304.8,400.3 307.2,398.6 309.2,400.3 311.7,398.8 313.5,400.3 315.3,398.7 317.7,400.3 320.0,398.6 322.2,400.3 324.4,399.3 326.1,400.3 328.3,399.0 330.8,400.3 333.2,398.7 335.0,400.3 337.0,399.2 339.1,400.3 341.2,399.3 343.6,400.3 345.7,398.9 348.1,400.3 350.5,399.0 352.6,400.3 354.4,399.0 356.2,400.3 358.5,399.3 360.6,400.3 362.8,399.1 364.9,400.3 367.2,399.3 369.4,400.3 371.3,398.8 373.4,400.3 375.7,398.7 377.7,400.3 379.9,399.0 382.1,400.3 384.2,399.0 386.7,400.3 389.1,398.6 391.0,400.3 393.4,398.7 395.3,400.3 397.3,399.3 399.2,400.3 401.4,398.8 403.9,400.3 406.1,398.9 407.9,400.3 410.4,399.2 412.9,400.3 415.0,398.6 417.3,400.3 419.4,399.0 421.4,400.3 423.3,398.8 425.0,400.3 427.1,399.4 429.0,400.3 431.2,399.3 433.6,400.3 436.1,399.3 438.0,400.3 440.4,399.2 442.2,400.3 444.6,398.7 446.5,400.3 448.9,398.9 451.2,400.3 452.9,398.8 455.0,400.3 457.4,398.9 459.8,400.3 462.2,399.3 464.5,400.3 466.5,399.0 469.0,400.3 470.8,399.0 472.6,400.3 474.5,399.4 476.3,400.3 478.3,398.8 480.2,400.3 482.1,399.1 483.8,400.3 485.5,398.8 487.6,400.3 489.8,400.0 490.8,395.5 491.5,398.6 492.4,391.0 493.2,395.4 494.2,386.5 495.0,391.6 496.0,382.0 496.8,387.5 497.6,377.5 498.3,382.5 499.1,375.5 499.8,380.0 500.6,368.0 501.6,358.0 502.6,354.5 503.3,352.3 503.9,360.0 504.3,385.0 504.8,401.2 508.0,401.3 512.0,401.3 516.0,401.3 517.6,400.8 518.6,398.0 519.2,372.0 519.8,330.0 520.4,308.0 521.2,305.5 522.0,301.0 523.1,296.0 523.8,305.0 524.3,322.0 524.8,334.0 525.4,352.0 525.9,385.0 526.5,401.0 528.5,398.4 530.5,398.2 532.5,399.0 534.5,400.6 536.0,401.3 540.0,401.3 543.4,401.0 544.2,392.0 544.9,384.2 545.6,393.0 546.3,397.0 546.8,400.8 547.6,300.0 548.3,266.2 549.1,327.0 551.0,401.3 552.0,400.8 553.2,399.2 555.0,398.8 556.6,399.5 558.0,399.0 559.6,400.0 561.0,401.0 563.0,401.3 567.6,401.0 568.2,392.0 568.7,385.4 569.5,397.0 570.6,386.0 571.4,380.5 571.9,388.0 571.7,400.8 572.5,288.1 573.2,250.3 574.0,318.2 575.6,401.3 576.6,400.8 577.8,399.2 579.6,398.8 581.2,399.5 582.6,399.0 584.2,400.0 585.6,401.0 588.0,401.3 592.2,401.0 592.7,391.0 593.2,384.2 593.9,394.0 594.8,398.5 596.1,400.8 596.9,274.3 597.6,232.0 598.1,270.7 599.2,318.0 600.5,401.3 601.5,400.8 602.7,399.2 604.5,398.8 606.1,399.5 607.5,399.0 609.1,400.0 610.5,401.0 613.0,401.3 617.2,401.0 617.6,392.0 618.1,386.6 618.9,396.0 619.9,392.5 620.5,391.0 620.9,400.8 621.7,264.1 622.4,218.3 622.9,287.0 624.3,371.0 626.2,401.3 627.2,400.8 628.4,399.2 630.2,398.8 631.8,399.5 633.2,399.0 634.8,400.0 636.2,401.0 638.0,401.3 642.4,401.0 642.8,393.0 643.4,387.9 644.1,397.0 645.0,382.0 645.6,376.8 645.9,386.0 645.7,400.8 646.5,257.8 647.2,210.0 648.0,296.1 649.3,401.3 650.3,400.8 651.5,399.2 653.3,398.8 654.9,399.5 656.3,399.0 657.9,400.0 659.3,401.0 661.5,401.3"/>
<polyline fill="none" stroke="#ff8030" stroke-width="1.35" stroke-linejoin="round" points="54.6,400.9 62.1,400.8 69.6,400.5 77.1,400.0 84.6,399.4 92.1,398.5 99.6,397.4 107.1,396.2 114.6,394.7 122.1,393.1 129.6,391.3 137.1,389.3 144.6,387.0 152.1,384.6 159.6,382.0 167.1,379.3 174.6,376.3 182.1,373.1 189.6,369.7 197.1,366.2 204.6,362.4 212.1,358.5 219.6,354.3 227.1,350.0 227.1,350.0 501.4,188.2 503.0,187.9 520.0,188.0 536.0,188.1 541.0,188.7 546.0,187.6 552.0,187.7 562.0,188.2 568.0,188.8 572.0,187.5 580.0,187.8 590.0,188.2 595.0,187.9 597.5,187.0 602.0,187.6 612.0,188.1 618.0,188.3 622.0,187.1 628.0,187.6 640.0,188.2 644.0,188.1 647.0,187.0 652.0,187.9 660.0,188.3 665.0,188.4"/>
<path d="M43.7 420.6V430.4H54.2" fill="none" stroke="#3e6c6c" stroke-width="1.3"/>
<path d="M45.4 427.4L47.6 424.4L49.4 425.8L51 423.8L52.2 424.8L54 422.4" fill="none" stroke="#3e6c6c" stroke-width="1.25"/>
<text x="65.95" y="428.4" font-size="6" font-weight="bold" fill="#50486a" textLength="15.3" lengthAdjust="spacingAndGlyphs">リセット</text>
<text x="91" y="428.4" font-size="6.2" font-weight="bold" fill="#50486a" textLength="14.9" lengthAdjust="spacingAndGlyphs">ズーム</text>
<g transform="translate(582.7,425.6) rotate(0)" fill="none" stroke="#3c6c70" stroke-width="1.75" stroke-linecap="round" stroke-linejoin="round"><path d="M0 4.4V-3.6M-3.7 -0.4L0 -4.1L3.7 -0.4"/></g>
<g transform="translate(604.3,425.3) rotate(180)" fill="none" stroke="#3c6c70" stroke-width="1.75" stroke-linecap="round" stroke-linejoin="round"><path d="M0 4.4V-3.6M-3.7 -0.4L0 -4.1L3.7 -0.4"/></g>
<g transform="translate(626.0,425.4) rotate(-90)" fill="none" stroke="#3c6c70" stroke-width="1.75" stroke-linecap="round" stroke-linejoin="round"><path d="M0 4.4V-3.6M-3.7 -0.4L0 -4.1L3.7 -0.4"/></g>
<g transform="translate(648.0,425.4) rotate(90)" fill="none" stroke="#3c6c70" stroke-width="1.75" stroke-linecap="round" stroke-linejoin="round"><path d="M0 4.4V-3.6M-3.7 -0.4L0 -4.1L3.7 -0.4"/></g>
<g fill="none" stroke="#3c6c70"><circle cx="684.4" cy="424.4" r="4.0" stroke-width="0.85"/><path stroke-width="1.25" d="M682.9 424.4h3M684.4 422.9v3"/><path stroke-width="0.9" d="M687.3 427.29999999999995L689.0 429.0"/></g><circle cx="689.4" cy="429.4" r="1.25" fill="#3c6c70"/>
<g fill="none" stroke="#3c6c70"><circle cx="706.1" cy="424.4" r="4.0" stroke-width="0.85"/><path stroke-width="1.25" d="M704.6 424.4h3"/><path stroke-width="0.9" d="M709.0 427.29999999999995L710.7 429.0"/></g><circle cx="711.1" cy="429.4" r="1.25" fill="#3c6c70"/>
<g fill="none" stroke="#3a8a70" stroke-width="0.8" stroke-linecap="round"><path d="M12 440.6Q17 436.8 22 440.6"/><path d="M13.7 442.4Q17 440 20.3 442.4"/><path d="M15.3 444.1Q17 442.9 18.7 444.1"/></g><circle cx="17" cy="445.3" r="0.7" fill="#3a8a70"/>
<rect x="270.6" y="128.6" width="46.6" height="43.4" rx="2.6" fill="#fff" stroke="#c2c2c2" stroke-width="0.9"/>
<rect x="321" y="128.8" width="114" height="43" rx="2" fill="#44f850"/>
<text x="83.1" y="167.6" font-size="49" fill="#0033ff">1</text>
<text x="197.4" y="167.8" font-size="49" fill="#0033ff">6</text>
<text x="530.3" y="168" font-size="49" fill="#0033ff">16.06</text>
<text x="443.5" y="160" font-size="26" fill="#0033ff" textLength="29" lengthAdjust="spacingAndGlyphs">00</text>
<text x="675" y="167.5" font-size="22" fill="#6a6a6a" textLength="42" lengthAdjust="spacing">N.m</text>
<text x="355" y="163.3" font-size="36.5" fill="#8a7a84" textLength="48" lengthAdjust="spacingAndGlyphs">OK</text>
<text x="274.3" y="155" font-size="14" fill="#484848" textLength="39.5" lengthAdjust="spacingAndGlyphs">Ready</text>
<text x="90.7" y="445.1" font-size="8" fill="#f2f8f6" textLength="65.9" lengthAdjust="spacingAndGlyphs">1808001 - 1904001</text>
<text x="645.6" y="445.1" font-size="8" fill="#f2f8f6" textLength="69.4" lengthAdjust="spacingAndGlyphs">2019/08/14 11:46:43</text>
</svg>
</body></html>
